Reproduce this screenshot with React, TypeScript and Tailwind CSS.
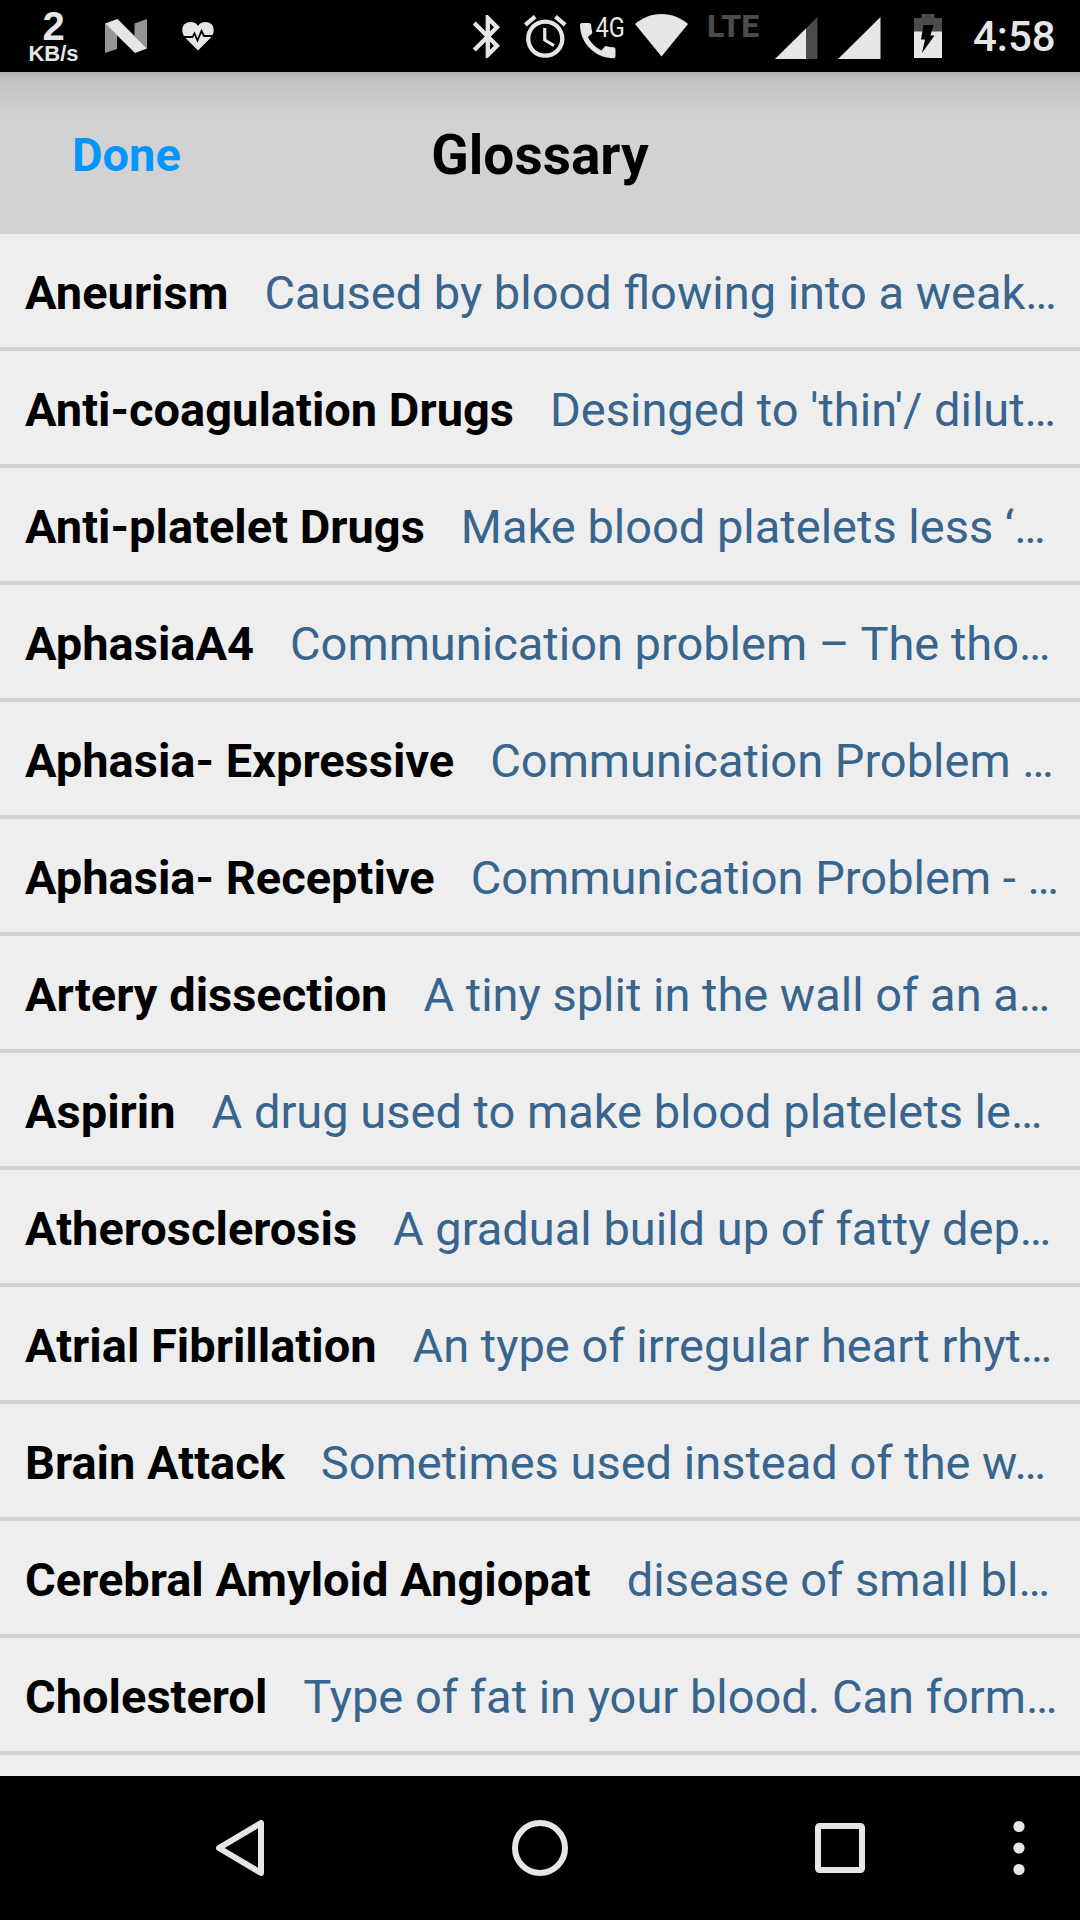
import type { ReactNode } from 'react';

interface GlossaryEntry {
  term: string;
  text: string;
}

const entries: GlossaryEntry[] = [
  { term: 'Aneurism', text: 'Caused by blood flowing into a weak…' },
  { term: 'Anti-coagulation Drugs', text: "Desinged to 'thin'/ dilut…" },
  { term: 'Anti-platelet Drugs', text: 'Make blood platelets less ‘…' },
  { term: 'AphasiaA4', text: 'Communication problem – The tho…' },
  { term: 'Aphasia- Expressive', text: 'Communication Problem …' },
  { term: 'Aphasia- Receptive', text: 'Communication Problem - …' },
  { term: 'Artery dissection', text: 'A tiny split in the wall of an a…' },
  { term: 'Aspirin', text: 'A drug used to make blood platelets le…' },
  { term: 'Atherosclerosis', text: 'A gradual build up of fatty dep…' },
  { term: 'Atrial Fibrillation', text: 'An type of irregular heart rhyt…' },
  { term: 'Brain Attack', text: 'Sometimes used instead of the w…' },
  { term: 'Cerebral Amyloid Angiopat', text: 'disease of small bl…' },
  { term: 'Cholesterol', text: 'Type of fat in your blood. Can form…' }
];

interface StatusIconProps {
  width: number;
  className?: string;
  children: ReactNode;
}

// every status icon spans the full height of the bar
function StatusIcon({ width, className, children }: StatusIconProps) {
  return (
    <svg width={width} height={72} viewBox={`0 0 ${width} 72`} fill="#e6e6e6" className={`shrink-0 ${className ?? ''}`}>
      {children}
    </svg>
  );
}

function StatusBar() {
  return (
    <div className="flex h-[72px] shrink-0 items-start bg-black text-[#e6e6e6]">
      <div className="ml-[27px] flex w-[53px] shrink-0 flex-col items-center pt-[7px] font-['Liberation_Sans',sans-serif] font-bold">
        <span className="text-[40px] leading-[38px]">2</span>
        <span className="text-[22px] leading-[17px]">KB/s</span>
      </div>

      <StatusIcon width={44} className="ml-[24px]">
        <path d="M1 23.5L13 35v14L1 53zM30.5 23.5L43 19v29.5L30.5 36z" fill="#959595" />
        <path d="M1 23.5L13.5 19 43 48.5 31 53z" />
      </StatusIcon>

      <StatusIcon width={34} className="ml-[33px]">
        <path d="M17 50.5L4 37.5C-1 31 1 22 9.500 22c3.500 0 6 1.600 7.500 4 1.500-2.400 4-4 7.500-4C33 22 35 31 30 37.500z" />
        <path d="M0 37h11.500l2-3.500 3 7 4-9.500 2.500 5H34" fill="none" stroke="#000" strokeWidth="1.800" />
      </StatusIcon>

      {/* bluetooth */}
      <StatusIcon width={28} className="ml-[257px]">
        <path
          transform="translate(-10 10.7) scale(2.15)"
          d="M17.71 7.71L12 2h-1v7.59L6.41 5 5 6.41 10.59 12 5 17.59 6.41 19 11 14.41V22h1l5.71-5.71-4.3-4.29 4.3-4.29zM13 5.83l1.88 1.88L13 9.59V5.83zm1.88 10.46L13 18.17v-3.76l1.88 1.88z"
        />
      </StatusIcon>

      {/* alarm */}
      <StatusIcon width={44} className="ml-[24px]">
        <path
          transform="translate(-4.3 11) scale(2.13)"
          d="M22 5.72l-4.6-3.86-1.29 1.53 4.6 3.86L22 5.72zM7.88 3.39L6.6 1.86 2 5.71l1.29 1.53 4.59-3.85zM12.5 8H11v6l4.75 2.85.75-1.23-4-2.37V8zM12 4c-4.97 0-9 4.03-9 9s4.02 9 9 9c4.97 0 9-4.03 9-9s-4.03-9-9-9zm0 16c-3.87 0-7-3.13-7-7s3.13-7 7-7 7 3.13 7 7-3.13 7-7 7z"
        />
      </StatusIcon>

      {/* call with network type */}
      <StatusIcon width={50} className="ml-[12px]">
        <path
          transform="translate(-5.9 17) scale(1.97)"
          d="M20.01 15.38c-1.23 0-2.42-.2-3.53-.56-.35-.12-.74-.03-1.01.24l-1.57 1.97c-2.83-1.35-5.48-3.9-6.89-6.83l1.95-1.66c.27-.28.35-.67.24-1.02-.37-1.11-.56-2.3-.56-3.53 0-.54-.45-.99-.99-.99H4.19C3.65 3 3 3.24 3 3.99 3 13.28 10.73 21 20.01 21c.71 0 .99-.63.99-1.18v-3.45c0-.54-.45-.99-.99-.99z"
        />
        <text transform="translate(15.5 36.5) scale(.86 1)" className="font-[Roboto,sans-serif] text-[27.5px]">
          4G
        </text>
      </StatusIcon>

      {/* wifi */}
      <StatusIcon width={54} className="ml-[5px]">
        <path d="M0 24C7 18 16 14 26.500 14S46 18 53 24L26.500 56.500z" />
      </StatusIcon>

      <span className="ml-[18px] mt-[7px] w-[55px] shrink-0 font-[Roboto,sans-serif] text-[32px] font-extrabold leading-[39px] tracking-[0.2px] text-[#4b4b4b]">
        LTE
      </span>

      <StatusIcon width={44} className="ml-[13px]">
        <path d="M0 59L42.500 17v42z" fill="#4b4b4b" />
        <path d="M0 59L31 28.400V59z" />
      </StatusIcon>

      <StatusIcon width={44} className="ml-[19px]">
        <path d="M0 59L42.500 17v42z" />
      </StatusIcon>

      {/* charging battery */}
      <StatusIcon width={28} className="ml-[32px]">
        <path d="M0 18h7.500v-4h13v4H28v14H0z" fill="#4b4b4b" />
        <path d="M0 31.500h28V58H0z" />
        <path d="M9.500 25h10l-3 10.500h4L8 53l3-13.500H7z" fill="#000" />
      </StatusIcon>

      <span className="ml-[31px] mt-[12px] shrink-0 font-[Roboto,sans-serif] text-[42px] font-medium leading-[50px]">
        4:58
      </span>
    </div>
  );
}

function Header() {
  return (
    <header className="grid h-[162px] shrink-0 grid-cols-3 items-center bg-linear-to-b from-[#aeaeae] via-[#c1c1c1] via-4% to-[#d2d2d2] to-27%">
      <button className="pl-[72px] pt-[4px] text-left text-[47px] font-bold leading-[56px] text-[#0096ff]">Done</button>
      <h1 className="pt-[4px] text-center text-[55px] font-bold leading-[64px] text-black">Glossary</h1>
    </header>
  );
}

function Row({ term, text }: GlossaryEntry) {
  return (
    <li className="flex h-[117px] shrink-0 items-center whitespace-nowrap border-b-4 border-[#d2d2d2] pl-[25px] pt-[5px] text-[47px] leading-[56px]">
      <span className="font-bold text-black">{term}</span>
      <span className="ml-[36px] text-[#38658d]">{text}</span>
    </li>
  );
}

function NavBar() {
  return (
    <nav className="flex h-36 shrink-0 items-center bg-black">
      <svg width={50} height={58} viewBox="0 0 50 58" className="ml-[215px]" fill="none" stroke="#e6e6e6" strokeWidth={6} strokeLinejoin="round">
        <path d="M46 4v50L4 29z" />
      </svg>
      <svg width={56} height={56} viewBox="0 0 56 56" className="ml-[247px]" fill="none" stroke="#e6e6e6" strokeWidth={6}>
        <circle cx="28" cy="28" r="25" />
      </svg>
      <svg width={50} height={50} viewBox="0 0 50 50" className="ml-[247px]" fill="none" stroke="#e6e6e6" strokeWidth={6}>
        <rect x="3" y="3" width="44" height="44" rx="1.500" />
      </svg>
      <svg width={12} height={56} viewBox="0 0 12 56" className="ml-[148px]" fill="#e6e6e6">
        <circle cx="6" cy="6.500" r="5.600" />
        <circle cx="6" cy="28" r="5.600" />
        <circle cx="6" cy="49.500" r="5.600" />
      </svg>
    </nav>
  );
}

export default function App() {
  return (
    <div className="flex h-[1920px] w-[1080px] flex-col overflow-hidden bg-[#eeeeee] font-[Roboto,sans-serif]">
      <StatusBar />
      <Header />
      <ul className="flex min-h-0 flex-1 flex-col overflow-hidden">
        {entries.map((entry) => (
          <Row key={entry.term} term={entry.term} text={entry.text} />
        ))}
      </ul>
      <NavBar />
    </div>
  );
}
